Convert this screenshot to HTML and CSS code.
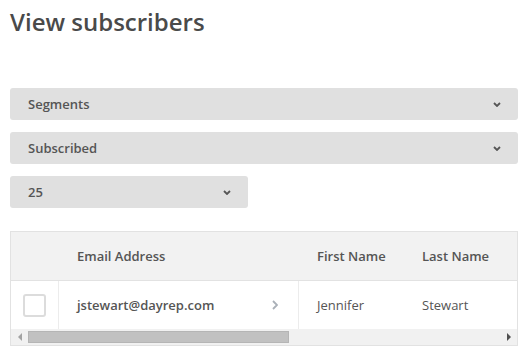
FILE: index.html
```html
<!DOCTYPE html>
<html lang="en">
<head>
    <meta charset="UTF-8">
    <meta name="viewport" content="width=device-width, initial-scale=1.0">
    <title>View subscribers</title>
    <link rel="stylesheet" href="styles.css">
</head>
<body>
    <h1>View subscribers</h1>

    <div class="filters">
        <div class="select">
            <span>Segments</span>
            <svg class="chev" viewBox="0 0 8 5" width="8" height="5"><path d="M1 1l3 3 3-3" fill="none" stroke="#555" stroke-width="1.8"/></svg>
        </div>
        <div class="select">
            <span>Subscribed</span>
            <svg class="chev" viewBox="0 0 8 5" width="8" height="5"><path d="M1 1l3 3 3-3" fill="none" stroke="#555" stroke-width="1.8"/></svg>
        </div>
        <div class="select select-small">
            <span>25</span>
            <svg class="chev" viewBox="0 0 8 5" width="8" height="5"><path d="M1 1l3 3 3-3" fill="none" stroke="#555" stroke-width="1.8"/></svg>
        </div>
    </div>

    <div class="table-wrap">
        <div class="grid-row head">
            <div class="cell check"></div>
            <div class="cell email">Email Address</div>
            <div class="cell first">First Name</div>
            <div class="cell">Last Name</div>
        </div>
        <div class="grid-row">
            <div class="cell check divider"><span class="checkbox"></span></div>
            <div class="cell email divider strong">
                <span>jstewart@dayrep.com</span>
                <svg class="arrow" viewBox="0 0 6 10" width="6" height="10"><path d="M1 1l4 4-4 4" fill="none" stroke="#aab0b8" stroke-width="1.8"/></svg>
            </div>
            <div class="cell first">Jennifer</div>
            <div class="cell">Stewart</div>
        </div>
        <div class="scrollbar">
            <span class="tri tri-left"></span>
            <span class="track"><span class="thumb"></span></span>
            <span class="tri tri-right"></span>
        </div>
    </div>
</body>
</html>
```

FILE: styles.css
```css
body {
    font-family: "Open Sans", Arial, sans-serif;
    margin: 0;
    padding: 0 9px 0 10px;
    color: #555;
    background: #fff;
}
h1 {
    font-size: 24px;
    font-weight: 600;
    color: #4a4a4a;
    margin: 7px 0 51px;
    line-height: 30px;
}
.filters {
    display: flex;
    flex-direction: column;
    gap: 12px;
    margin-bottom: 23px;
}
.select {
    display: flex;
    align-items: center;
    justify-content: space-between;
    height: 32px;
    padding: 0 17px 0 18px;
    background: #e0e0e0;
    border-radius: 3px;
    font-size: 13px;
    font-weight: 600;
    color: #555;
}
.select-small {
    width: 203px;
}
.chev {
    display: block;
}
.table-wrap {
    border: 1px solid #e2e2e2;
    overflow: hidden;
    font-size: 13px;
}
.grid-row {
    display: grid;
    grid-template-columns: 48px 240px 105px 1fr;
    height: 48px;
}
.grid-row.head {
    background: #f2f2f2;
    border-bottom: 1px solid #e2e2e2;
    font-weight: 600;
}
.cell {
    display: flex;
    align-items: center;
    padding-left: 18px;
    white-space: nowrap;
}
.cell.check {
    justify-content: center;
    padding: 0;
}
.divider {
    border-right: 1px solid #ececec;
}
.strong {
    font-weight: 600;
}
.cell.email {
    justify-content: space-between;
    padding-right: 20px;
}
.checkbox {
    display: block;
    width: 19px;
    height: 19px;
    border: 2px solid #dcdcdc;
    border-radius: 3px;
}
.arrow {
    display: block;
}
.scrollbar {
    display: flex;
    align-items: center;
    height: 16px;
    background: #f1f1f1;
}
.tri {
    width: 17px;
    display: flex;
    justify-content: center;
}
.tri-left::before {
    content: "";
    border-style: solid;
    border-width: 4px 4px 4px 0;
    border-color: transparent #a3a3a3 transparent transparent;
}
.tri-right::before {
    content: "";
    border-style: solid;
    border-width: 4px 0 4px 4px;
    border-color: transparent transparent transparent #505050;
}
.track {
    flex: 1;
    height: 12px;
}
.thumb {
    display: block;
    width: 261px;
    height: 12px;
    background: #c1c1c1;
    border: 1px solid #b5b5b5;
    box-sizing: border-box;
}
```
